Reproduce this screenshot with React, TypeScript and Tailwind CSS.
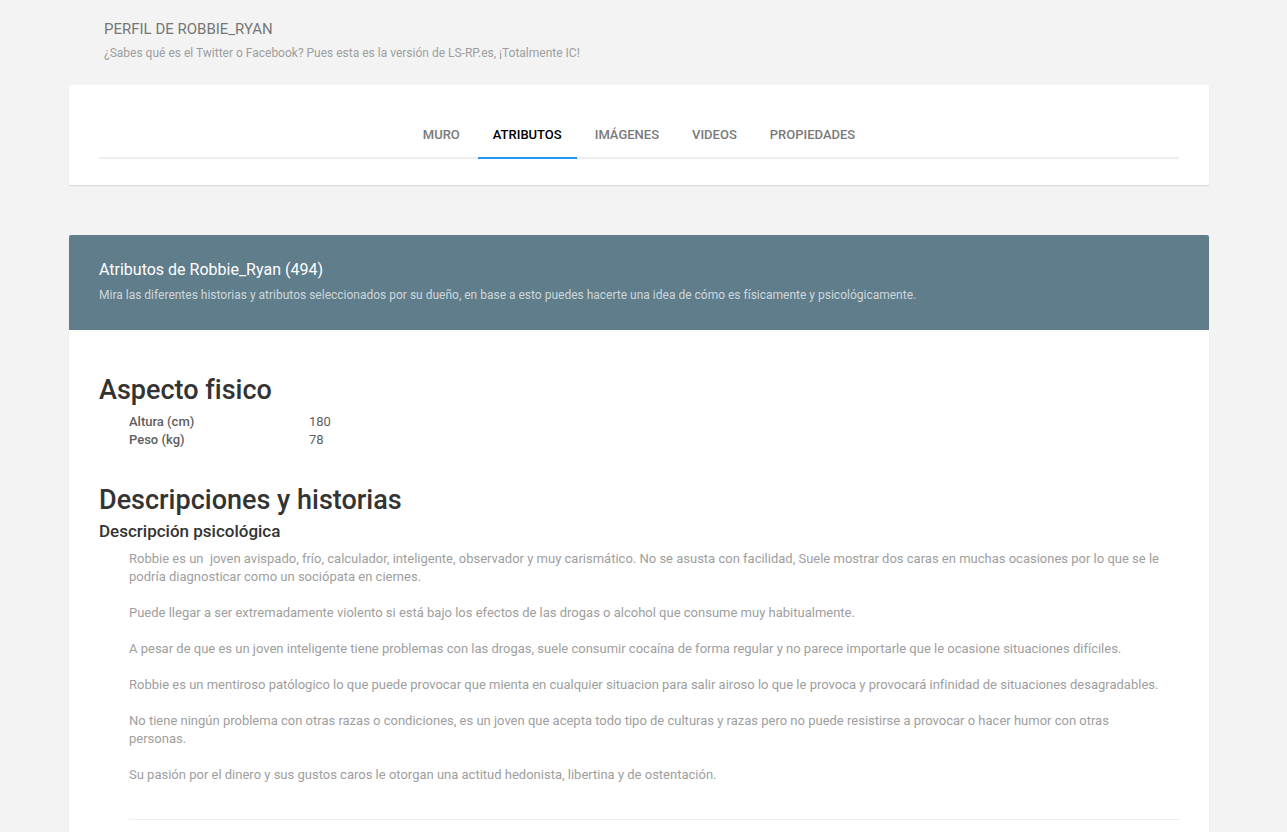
import clsx from "clsx";

const tabs = ["Muro", "Atributos", "Imágenes", "Videos", "Propiedades"];

const attributes = [
  { label: "Altura (cm)", value: 180 },
  { label: "Peso (kg)", value: 78 },
];

const paragraphs = [
  "Robbie es un  joven avispado, frío, calculador, inteligente, observador y muy carismático. No se asusta con facilidad, Suele mostrar dos caras en muchas ocasiones por lo que se le podría diagnosticar como un sociópata en ciernes.",
  "Puede llegar a ser extremadamente violento si está bajo los efectos de las drogas o alcohol que consume muy habitualmente.",
  "A pesar de que es un joven inteligente tiene problemas con las drogas, suele consumir cocaína de forma regular y no parece importarle que le ocasione situaciones difíciles.",
  "Robbie es un mentiroso patólogico lo que puede provocar que mienta en cualquier situacion para salir airoso lo que le provoca y provocará infinidad de situaciones desagradables.",
  "No tiene ningún problema con otras razas o condiciones, es un joven que acepta todo tipo de culturas y razas pero no puede resistirse a provocar o hacer humor con otras personas.",
  "Su pasión por el dinero y sus gustos caros le otorgan una actitud hedonista, libertina y de ostentación.",
];

function PageHeader() {
  return (
    <header className="px-[35px] pt-5 pb-[22px]">
      <h2 className="text-[15px] leading-[18px] uppercase text-[#777]">Perfil de Robbie_Ryan</h2>
      <p className="mt-1.5 text-xs leading-[19px] text-[#9e9e9e]">
        ¿Sabes qué es el Twitter o Facebook? Pues esta es la versión de LS-RP.es, ¡Totalmente IC!
      </p>
    </header>
  );
}

function ProfileTabs({ active }: { active: string }) {
  return (
    <nav className="rounded-xs bg-white px-[30px] pt-7 pb-[26px] shadow-[0_1px_1px_rgba(0,0,0,0.12)]">
      <ul className="flex justify-center gap-[3px] shadow-[inset_0_-2px_0_0_#eee]">
        {tabs.map((tab) => (
          <li key={tab}>
            <a
              href="#"
              aria-current={tab === active ? "page" : undefined}
              className={clsx(
                "block border-b-2 px-[15px] py-[13px] text-[13px] leading-[18px] font-medium uppercase",
                tab === active ? "border-[#2196f3] text-black" : "border-transparent text-[#7a7a7a]"
              )}
            >
              {tab}
            </a>
          </li>
        ))}
      </ul>
    </nav>
  );
}

function AttributesCard() {
  return (
    <section className="mt-[50px] flex-1 rounded-t-xs bg-white shadow-[0_1px_1px_rgba(0,0,0,0.12)]">
      <div className="rounded-t-xs bg-[#607d8b] px-[30px] pt-[25px] pb-[25px]">
        <h2 className="text-base leading-5 text-white">Atributos de Robbie_Ryan (494)</h2>
        <p className="mt-1.5 text-xs leading-[19px] text-white/70">
          Mira las diferentes historias y atributos seleccionados por su dueño, en base a esto puedes
          hacerte una idea de cómo es físicamente y psicológicamente.
        </p>
      </div>

      <div className="px-[30px] pt-11">
        <h3 className="text-[27px] leading-8 font-medium text-[#333]">Aspecto fisico</h3>
        <dl className="mt-[7px] pl-[30px] text-[13px] leading-[18px] text-[#5e5e5e]">
          {attributes.map(({ label, value }) => (
            <div key={label} className="flex">
              <dt className="w-[180px] font-medium">{label}</dt>
              <dd>{value}</dd>
            </div>
          ))}
        </dl>

        <h3 className="mt-[35px] text-[27px] leading-8 font-medium text-[#333]">
          Descripciones y historias
        </h3>
        <h4 className="mt-[5px] text-[17px] leading-5 font-medium text-[#333]">
          Descripción psicológica
        </h4>
        <div className="mt-[9px] ml-[30px] flex flex-col gap-[18px] border-b border-[#eee] pr-4 pb-[35px] text-[13px] leading-[18px] whitespace-pre-wrap text-[#9e9e9e]">
          {paragraphs.map((text) => (
            <p key={text}>{text}</p>
          ))}
        </div>
      </div>
    </section>
  );
}

export default function App() {
  return (
    <div className="flex min-h-screen flex-col bg-[#f3f3f3] pr-[9px] font-[Roboto,sans-serif] [font-variant-ligatures:no-common-ligatures]">
      <div className="mx-auto flex w-full max-w-[1140px] flex-1 flex-col">
        <PageHeader />
        <ProfileTabs active="Atributos" />
        <AttributesCard />
      </div>
    </div>
  );
}
